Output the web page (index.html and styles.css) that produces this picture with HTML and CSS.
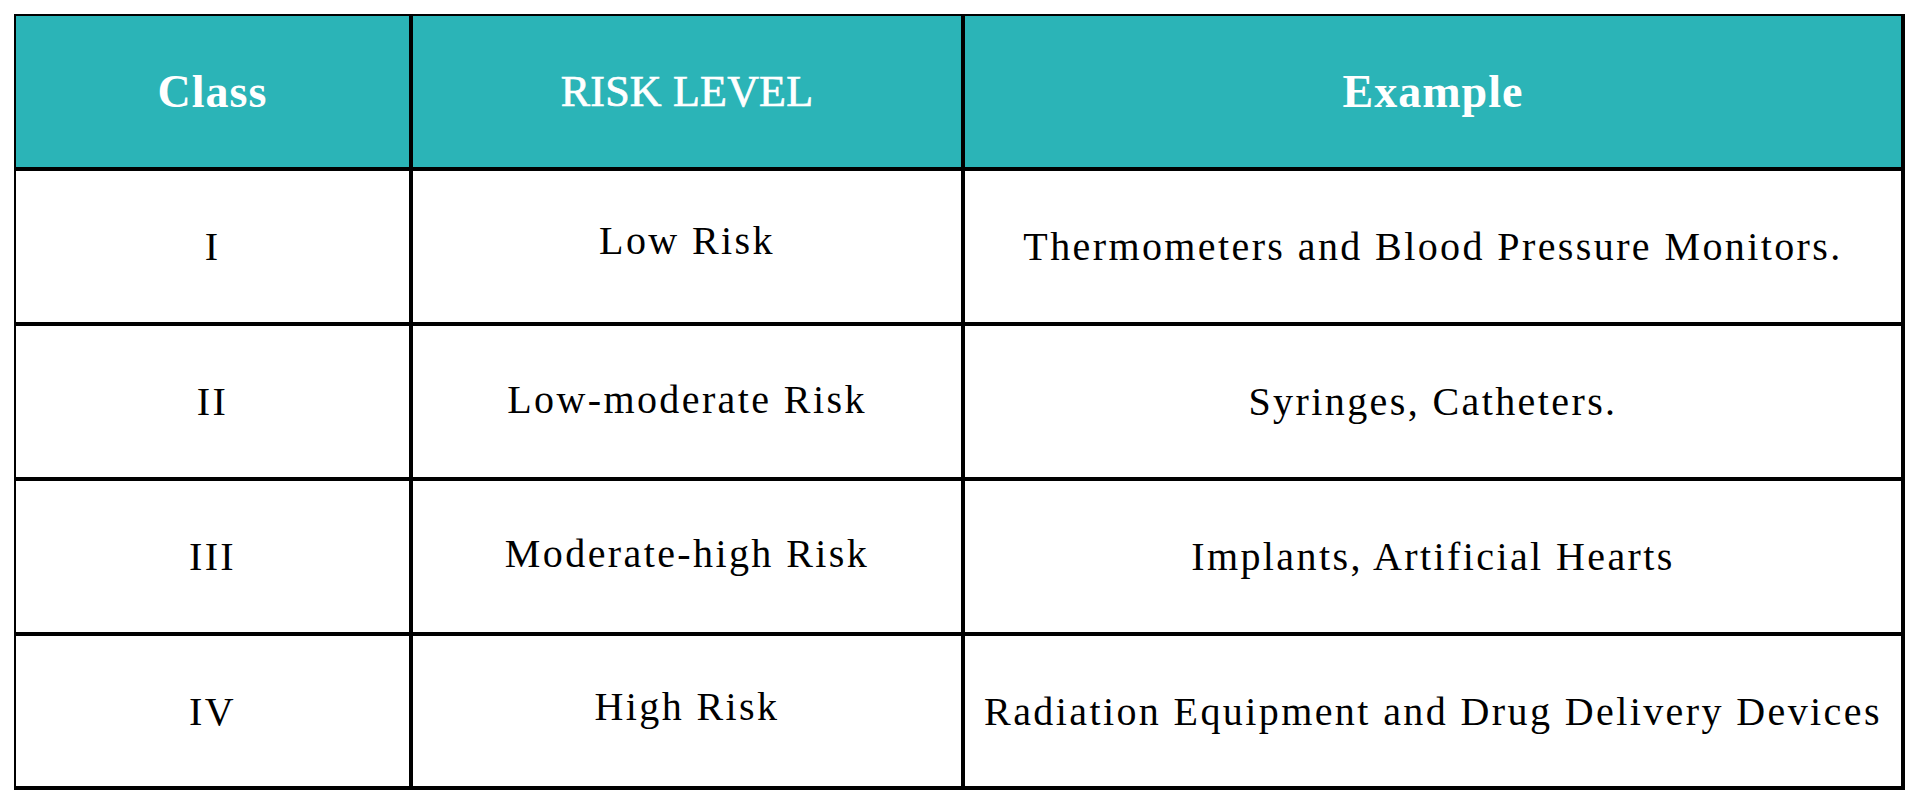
FILE: index.html
```html
<!DOCTYPE html>
<html lang="en">
<head>
<meta charset="utf-8">
<title>Medical Device Classes</title>
<link rel="stylesheet" href="styles.css">
</head>
<body>
<div class="page">
  <div class="grid" role="table">
    <div class="cell head bold" role="columnheader">Class</div>
    <div class="cell head medium" role="columnheader">RISK LEVEL</div>
    <div class="cell head bold" role="columnheader">Example</div>

    <div class="cell" role="cell">I</div>
    <div class="cell risk r1" role="cell">Low Risk</div>
    <div class="cell" role="cell">Thermometers and Blood Pressure Monitors.</div>

    <div class="cell" role="cell">II</div>
    <div class="cell risk r2" role="cell">Low-moderate Risk</div>
    <div class="cell" role="cell">Syringes, Catheters.</div>

    <div class="cell" role="cell">III</div>
    <div class="cell risk r3" role="cell">Moderate-high Risk</div>
    <div class="cell" role="cell">Implants, Artificial Hearts</div>

    <div class="cell" role="cell">IV</div>
    <div class="cell risk r4" role="cell">High Risk</div>
    <div class="cell" role="cell">Radiation Equipment and Drug Delivery Devices</div>
  </div>
</div>
</body>
</html>
```
FILE: styles.css
```css
html, body {
  margin: 0;
  padding: 0;
  background: #ffffff;
}
.page {
  padding: 14px 0 0 14px;
}
.grid {
  display: grid;
  grid-template-columns: 393px 548px 936px;
  grid-template-rows: 151px 151px 151px 151px 150px;
  gap: 4px;
  padding: 2px 4px 4px 2px;
  width: max-content;
  background: #000000;
}
.cell {
  display: flex;
  align-items: center;
  justify-content: center;
  background: #ffffff;
  color: #000000;
  font-family: "Liberation Serif", "Times New Roman", serif;
  font-size: 40px;
  letter-spacing: 2.4px;
  white-space: nowrap;
}
.head {
  background: #2bb4b7;
  color: #ffffff;
  font-size: 44px;
  letter-spacing: 0;
}
.head.medium {
  -webkit-text-stroke: 0.7px #ffffff;
  letter-spacing: 0.2px;
}
.head.bold {
  font-weight: bold;
  font-size: 46px;
  letter-spacing: 1px;
}
.risk.r1 { padding-bottom: 12px; }
.risk.r2 { padding-bottom: 4px; }
.risk.r3 { padding-bottom: 6px; }
.risk.r4 { padding-bottom: 10px; }
```
